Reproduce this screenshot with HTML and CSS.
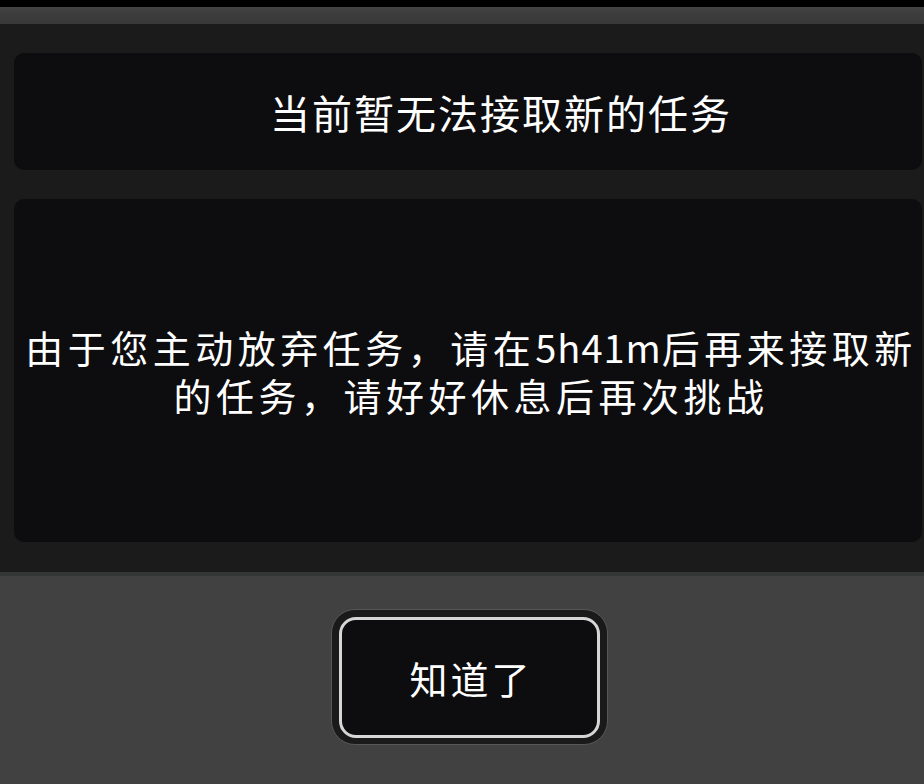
FILE: index.html
```html
<!DOCTYPE html>
<html lang="zh-CN">
<head>
<meta charset="utf-8">
<link rel="stylesheet" href="styles.css">
</head>
<body>
<div class="screen">
  <div class="top"></div>
  <div class="band"></div>
  <div class="panel">
    <div class="card card-title">
      <div class="title">当前暂无法接取新的任务</div>
    </div>
    <div class="card card-body">
      <div class="msg">由于您主动放弃任务，请在<span class="num">5h41m</span>后再来接取新的任务，请好好休息后再次挑战</div>
    </div>
  </div>
  <div class="sep"></div>
  <div class="footer">
    <div class="btn-ring">
      <div class="btn">知道了</div>
    </div>
  </div>
</div>
</body>
</html>
```

FILE: styles.css
```css
html, body {
  margin: 0;
  padding: 0;
  background: #414141;
}
.screen {
  width: 924px;
  height: 784px;
  overflow: hidden;
  display: flex;
  flex-direction: column;
  font-family: "Noto Sans CJK SC", "Noto Sans", sans-serif;
  color: #ffffff;
}
.top {
  height: 7px;
  background: #000;
}
.band {
  height: 17px;
  background: linear-gradient(#444444 0%, #3d3d3d 40%, #393939 100%);
}
.panel {
  background: #1b1b1b;
  padding: 29px 2px 30px 14px;
  display: flex;
  flex-direction: column;
  gap: 29px;
}
.card {
  background: #0d0c0e;
  border-radius: 10px;
  display: flex;
  align-items: center;
  justify-content: center;
}
.card-title {
  height: 117px;
  padding-left: 66px;
}
.title {
  font-size: 40px;
  letter-spacing: 2px;
  line-height: 48px;
}
.card-body {
  height: 343px;
}
.msg {
  font-size: 38px;
  letter-spacing: 4.5px;
  line-height: 48px;
  text-align: center;
  padding: 0 0 0 6px;
}
.num {
  letter-spacing: 1px;
}
.sep {
  height: 4px;
  background: #353636;
}
.footer {
  flex: 1;
  display: flex;
  justify-content: center;
  align-items: flex-start;
  padding-top: 33px;
  padding-left: 15px;
}
.btn-ring {
  width: 275px;
  height: 134px;
  border: 1px solid #575757;
  border-radius: 24px;
  background: #1a1a1a;
  display: flex;
  align-items: center;
  justify-content: center;
}
.btn {
  box-sizing: border-box;
  width: 261px;
  height: 121px;
  border: 3px solid #d6d6d6;
  border-radius: 17px;
  background: #0d0c0e;
  display: flex;
  align-items: center;
  justify-content: center;
  font-size: 38px;
  letter-spacing: 3px;
  padding-left: 3px;
}
```
